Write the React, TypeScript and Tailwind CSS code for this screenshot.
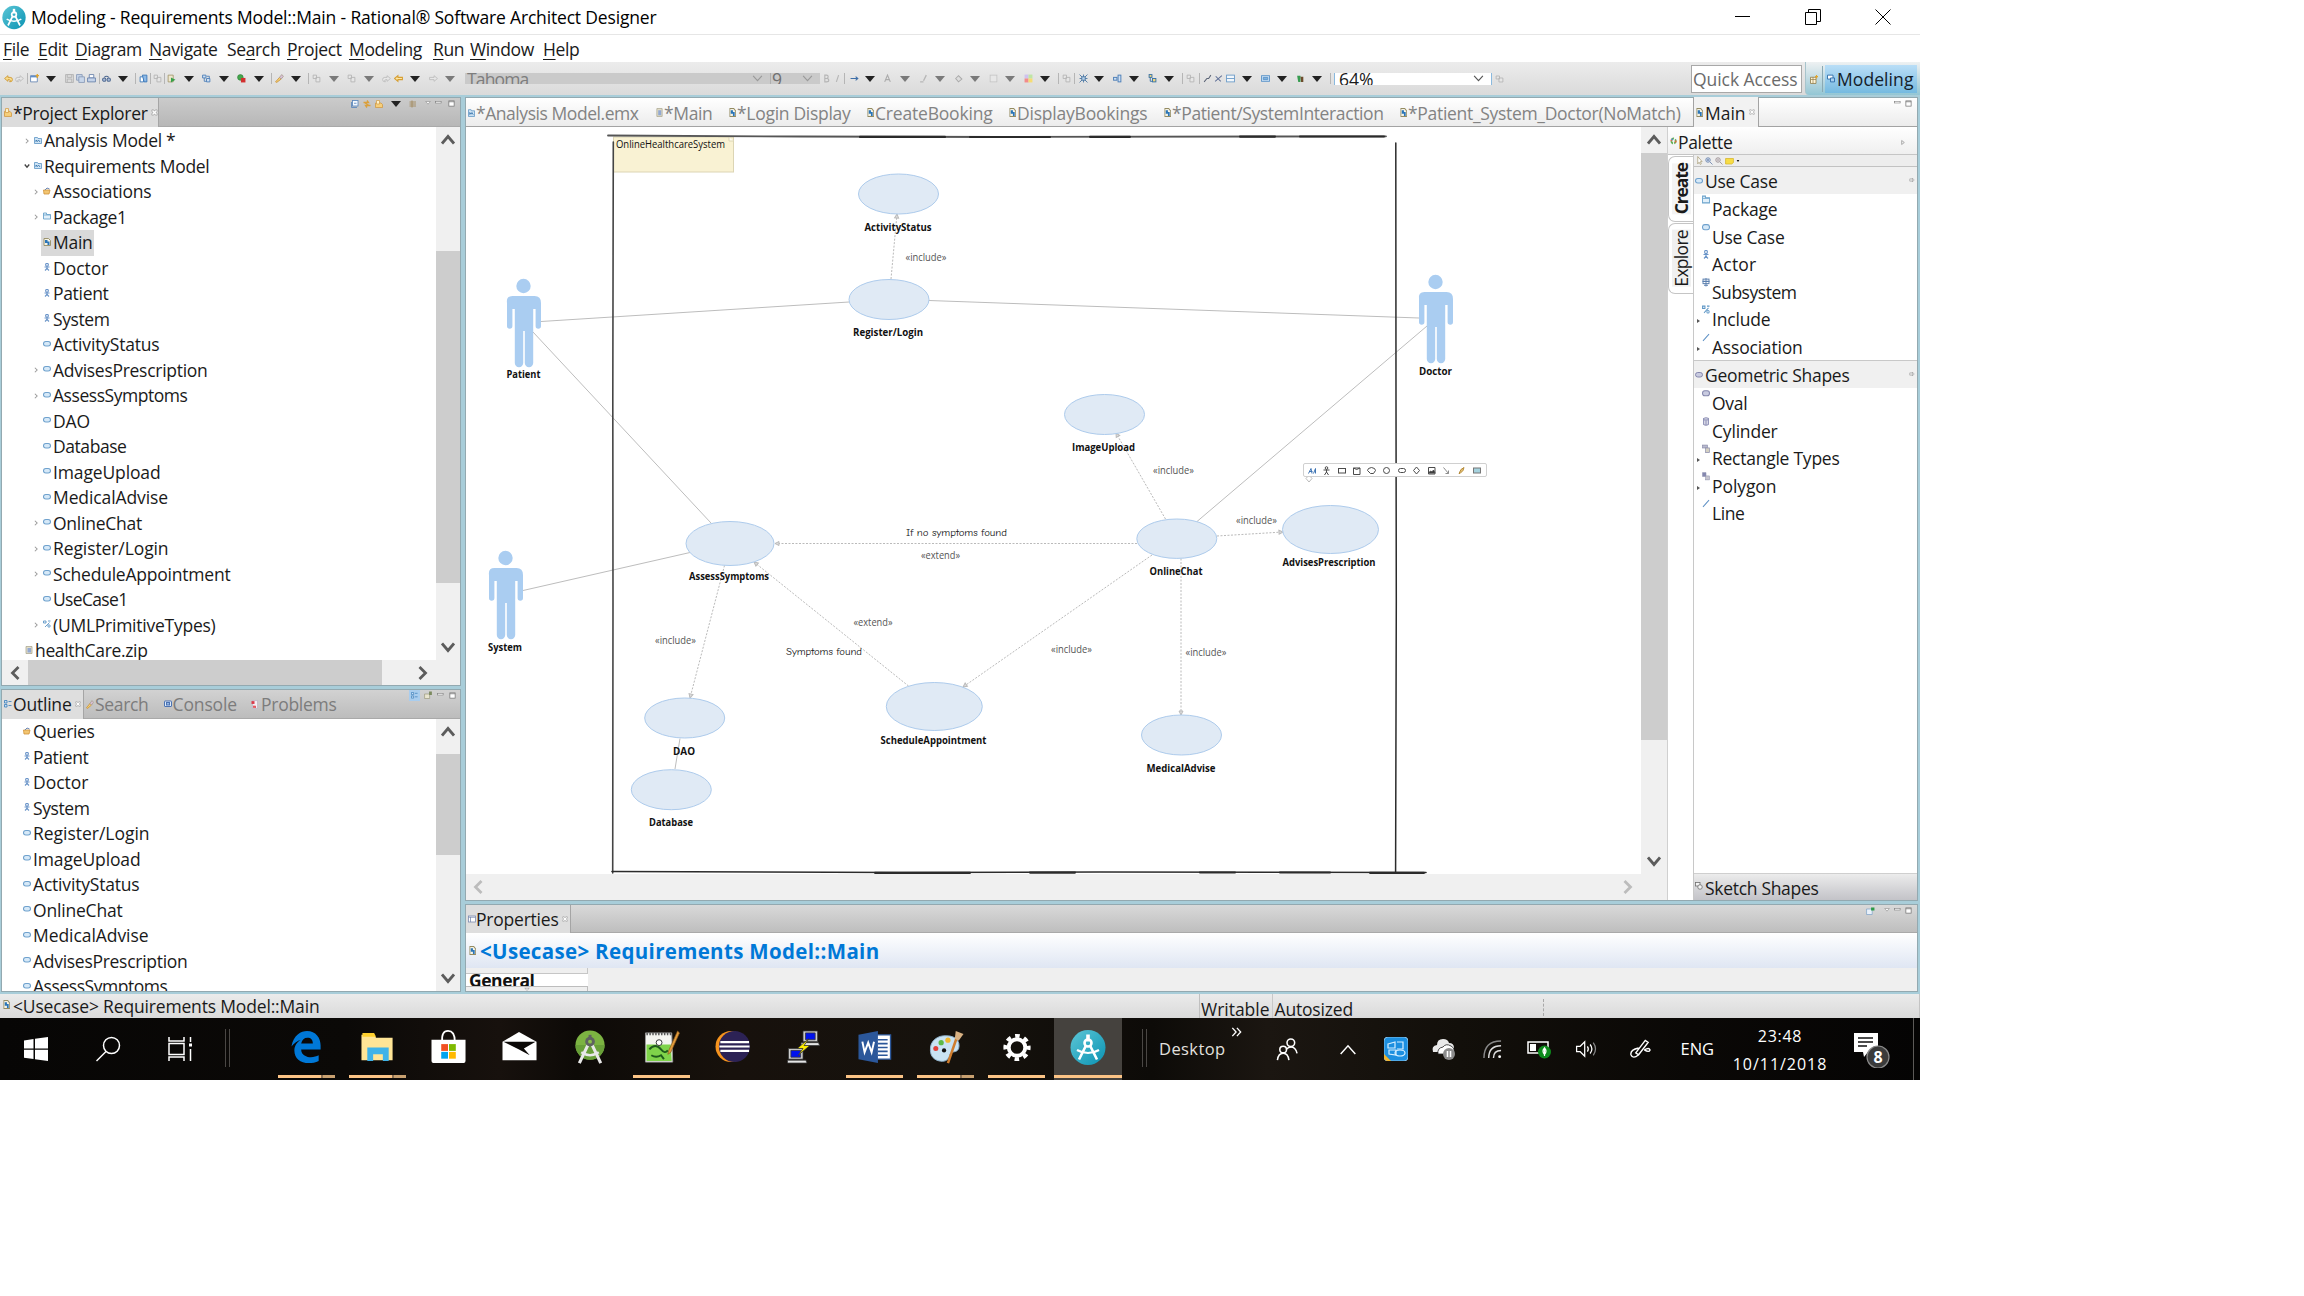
import React, { useLayoutEffect, useRef, useState } from 'react';

/* Single-line label whose tracking is tuned so that it fills a given width. */
function Fit({ w, children, className = '' }: { w: number; children: string; className?: string }) {
  const ref = useRef<HTMLSpanElement>(null);
  const [ls, setLs] = useState(0);
  useLayoutEffect(() => {
    const el = ref.current;
    if (el) setLs((w + 1.5 - el.getBoundingClientRect().width) / children.length);
  }, []);
  return (
    <span ref={ref} className={'inline-block shrink-0 whitespace-pre ' + className} style={{ letterSpacing: ls }}>
      {children}
    </span>
  );
}

type IconProps = { k: string; className?: string };

/* Miniature workbench icons on a 16 unit grid. */
function Ico({ k, className = '' }: IconProps) {
  const body: Record<string, React.ReactNode> = {
    model: (<><path d="M1 3h6l1 2h7v10H1z" fill="#cfe4f5" stroke="#5c94c4" strokeWidth="1.6" /><path d="M4 12V8l3 3 2-3 3 4" fill="none" stroke="#2f6ea8" strokeWidth="1.6" /></>),
    folder: (<><path d="M1 2h6v3h8v9H1z" fill="#e2f0fa" stroke="#6ba3cc" strokeWidth="1.8" /><path d="M1 6h14" stroke="#6ba3cc" strokeWidth="1.6" /></>),
    gold: (<><path d="M1 6h13l-2 8H2z" fill="#f3c672" stroke="#cf9239" strokeWidth="1.6" /><path d="M4 6l4-4 5 2" stroke="#6a86b4" strokeWidth="2" fill="none" /></>),
    diagram: (<><path d="M2 1h9l4 4v10H2z" fill="#f5f3e6" stroke="#948b62" strokeWidth="1.8" /><path d="M4 4h5v6H4zM9 7h4v7H9z" fill="#2a75b8" /></>),
    actor: (<g stroke="#6b95c9" strokeWidth="2.2" fill="none"><circle cx="8" cy="3.5" r="2.8" /><path d="M8 6v5M3 8h10M8 11l-4 4M8 11l4 4" /></g>),
    oval: <rect x="1" y="3" width="14" height="9" rx="4.500" fill="#d6e9f8" stroke="#6fa1cd" strokeWidth="2.2" />,
    ovalg: <rect x="1" y="3" width="14" height="9" rx="4.500" fill="#c9cbe0" stroke="#8486ad" strokeWidth="2" />,
    link: (<g fill="none" stroke="#5d96c6" strokeWidth="1.8"><path d="M1 2h5v4H1zM10 2h5M4 14L13 5" /><circle cx="12" cy="12" r="2.4" /></g>),
    zip: (<><path d="M2 1h12v14H2z" fill="#e3dfcb" stroke="#a8a48c" strokeWidth="1.5" /><path d="M5 4h7v9H5z" fill="#93a9d2" /></>),
    sub: (<g fill="none" stroke="#5b7fae" strokeWidth="1.8"><rect x="2" y="2" width="12" height="8" /><path d="M8 0v15M1 6h14M4 13h8" /></g>),
    line: <path d="M2 14L14 2" stroke="#5b8fc4" strokeWidth="2" />,
    cyl: (<g fill="#d6d7e6" stroke="#8d8fb5" strokeWidth="1.8"><path d="M3 3v10q5 3 10 0V3z" /><ellipse cx="8" cy="3.5" rx="5" ry="2" /><path d="M8 6v8" /></g>),
    rects: (<g fill="#b8bace" stroke="#8e90ad" strokeWidth="1.4"><rect x="1" y="2" width="10" height="5" /><rect x="7" y="7" width="8" height="8" fill="#d4d0c2" /></g>),
    poly: (<g fill="#8588b0" stroke="#8e90ad"><path d="M1 1h7v7H1z" /><rect x="7" y="7" width="8" height="7" fill="#c7c6cf" /></g>),
    back: <path d="M1 8l6-5v3h4q4 0 4 4t-5 4q3-4-1-4H7v3z" fill="#f8dc8b" stroke="#cf9a36" strokeWidth="1.6" />,
    backg: <path d="M15 8L9 3v3H5q-4 0-4 4t5 4q-3-4 1-4h2v3z" fill="#e7e7e7" stroke="#bdbdbd" strokeWidth="1.6" />,
    fwdg: <path d="M15 8L9 3v3H1v4h8v3z" fill="#e7e7e7" stroke="#bdbdbd" strokeWidth="1.6" />,
    leftg: <path d="M1 8l6-5v3h8v4H7v3z" fill="#fbe6a6" stroke="#d79f33" strokeWidth="1.8" />,
    new: (<><path d="M1 3h12v11H1z" fill="#fff" stroke="#6b8ab5" strokeWidth="1.6" /><path d="M1 3h12v3H1z" fill="#5f8ecb" /><path d="M13 0v7M10 3h6" stroke="#e0a52e" strokeWidth="2.4" /></>),
    disk: (<g fill="#dcdcdc" stroke="#b1b1b1" strokeWidth="1.5"><path d="M1 1h14v14H1z" /><path d="M4 1h8v5H4zM4 9h8v6H4z" /></g>),
    disks: (<g fill="#c8d6ea" stroke="#8799b7" strokeWidth="1.5"><path d="M1 1h10v10H1z" /><path d="M5 5h10v10H5z" /></g>),
    print: (<g fill="#c4d3ea" stroke="#6c84ad" strokeWidth="1.6"><path d="M4 1h8v6H4z" fill="#fff" /><path d="M1 7h14v7H1z" /></g>),
    glasses: (<g fill="#a9bbd8" stroke="#4d678f" strokeWidth="1.8"><circle cx="4" cy="10" r="3" /><circle cx="12" cy="10" r="3" /><path d="M4 6q4-4 8 0" fill="none" /></g>),
    blue: (<g fill="#8db9e6" stroke="#3a77b8" strokeWidth="1.6"><path d="M2 5h6v9H2z" fill="#fff" /><path d="M6 2h8v12H9z" /></g>),
    grey: (<g fill="#e6e6e6" stroke="#b5b5b5" strokeWidth="1.6"><path d="M2 2h6v6H2zM7 6h7v8H7z" /></g>),
    run: (<><path d="M2 2h9v12H2z" fill="#eee8cf" stroke="#a2976a" strokeWidth="1.5" /><path d="M7 6l8 4-8 5z" fill="#38a04a" /></>),
    boxes: (<g fill="#cfe0f3" stroke="#4d7fb8" strokeWidth="1.6"><path d="M1 2h6v5H1zM8 8h6v6H8z" /><path d="M8 4h5v4M4 7v6h4" fill="none" /></g>),
    stop: (<><circle cx="6" cy="6" r="5" fill="#45a74d" stroke="#2b7b34" /><rect x="7" y="7" width="8" height="8" fill="#d22f2f" /></>),
    torch: (<><path d="M1 14l7-8 3 3-8 6z" fill="#f5cf73" stroke="#c78f35" strokeWidth="1.4" /><path d="M8 6l4-5 3 3-4 5z" fill="#d9c0d8" stroke="#a79a8b" strokeWidth="1.4" /></>),
    bold: <path d="M5 2v12h3q4 0 4-3t-4-3H5h3q3 0 3-3T8 2z" fill="none" stroke="#b5b5b5" strokeWidth="2" />,
    ital: <path d="M10 2L6 14" stroke="#b5b5b5" strokeWidth="2" />,
    arrow: <path d="M1 8h13M10 4.500l4 3.500-4 3.500" fill="none" stroke="#3d6ea8" strokeWidth="1.8" />,
    ag: <path d="M3 14L8 2l5 12M5 10h6" fill="none" stroke="#ababab" strokeWidth="2" />,
    pen: <path d="M2 14h6M8 12l5-10" stroke="#b7b7b7" strokeWidth="2.4" fill="none" />,
    bucket: <path d="M3 8l5-5 6 6-6 5z" fill="#ddd" stroke="#aaa" strokeWidth="1.8" />,
    sq: <rect x="2" y="2" width="12" height="12" fill="#e7e7e7" stroke="#c4c4c4" strokeWidth="1.4" />,
    colors: (<><rect x="1" y="1" width="7" height="7" fill="#cfc2ee" /><rect x="8" y="1" width="7" height="7" fill="#bfe6a5" /><rect x="1" y="8" width="7" height="7" fill="#f28c8c" /><rect x="8" y="8" width="7" height="7" fill="#f6dc74" /></>),
    mesh: (<g stroke="#44719f" strokeWidth="1.5" fill="#b9d3ea"><path d="M1 1l14 14M15 1L1 15M8 1v14M1 8h14" /><rect x="5" y="5" width="6" height="6" /></g>),
    nodes: (<g fill="#cfe0f3" stroke="#4d7fb8" strokeWidth="1.7"><rect x="1" y="6" width="6" height="5" /><rect x="9" y="2" width="5" height="12" /></g>),
    tree: (<g fill="#f3d678" stroke="#3b74a8" strokeWidth="1.7"><rect x="2" y="1" width="5" height="5" /><rect x="8" y="8" width="6" height="6" /><path d="M4 6v7h4" fill="none" /></g>),
    cross: <path d="M2 13L14 3M3 4l9 9" fill="none" stroke="#5f6f96" strokeWidth="1.8" />,
    diag: <path d="M2 14l5-6h3l4-6" fill="none" stroke="#5a6375" strokeWidth="1.8" />,
    split: (<g fill="#f2f7fc" stroke="#6c9cc8" strokeWidth="1.6"><rect x="1" y="2" width="14" height="12" /><path d="M1 8h14" /></g>),
    img: (<g fill="#cfe3f5" stroke="#5a93c8" strokeWidth="1.6"><rect x="1" y="3" width="14" height="10" /><path d="M4 6h8v4H4z" fill="#7fb2de" /></g>),
    green: (<><path d="M2 3h6v11H4z" fill="#379c50" /><path d="M8 5h5v9H9z" fill="#6c4c2c" /></>),
    outline: (<g fill="#cfe0f3" stroke="#3f83bd" strokeWidth="1.7"><path d="M1 1h5v5H1zM1 9h5v5H1z" /><path d="M9 3h6M9 11h6" /></g>),
    console: (<g stroke="#4c73b3" strokeWidth="2"><rect x="1" y="2" width="14" height="11" rx="1" fill="#dce9f8" /><rect x="5" y="5" width="6" height="5" fill="#93b7e6" /></g>),
    problems: (<><path d="M3 1h10v14H3z" fill="#f3eef4" stroke="#b3a4bb" /><path d="M1 2h6v5H1z" fill="#d83a4a" /><path d="M4 10h6v4H4z" fill="#e35b62" /></>),
    prop: (<g stroke="#7a8bb0" strokeWidth="1.6" fill="#fff"><rect x="1" y="2" width="14" height="12" /><path d="M1 4.500h14M5 4v10" /></g>),
    palette: (<><circle cx="8" cy="8" r="5" fill="none" stroke="#5fae52" strokeWidth="4" strokeDasharray="6 3" /><circle cx="8" cy="8" r="5" fill="none" stroke="#e06a3c" strokeWidth="4" strokeDasharray="3 12" /><circle cx="5" cy="5" r="2" fill="#4f8cd0" /></>),
    cursor: <path d="M4 1v13l3-3 3 4 2-1-2-4h4z" fill="#fff" stroke="#9a8c62" strokeWidth="1.3" />,
    zin: (<g stroke="#6d84ab" fill="#cfdcf0" strokeWidth="1.7"><circle cx="6" cy="6" r="4.500" /><path d="M6 4v4M4 6h4M10 10l5 5" /></g>),
    zout: (<g stroke="#9a8f8f" fill="#e3e0e6" strokeWidth="1.7"><circle cx="6" cy="6" r="4.500" /><path d="M4 6h4M10 10l5 5" /></g>),
    note: <path d="M1 3h14v8l-3 3H1z" fill="#f7dc45" stroke="#d5b528" strokeWidth="1.4" />,
    collapse: (<g stroke="#5b87bd" strokeWidth="1.7" fill="#f4f9ff"><rect x="3" y="1" width="11" height="11" /><path d="M1 4v11h11M6 6.500h5" fill="none" /></g>),
    sync: <path d="M1 5h10l-3-4M15 11H5l3 4M3 5l9 6" fill="none" stroke="#dba03b" strokeWidth="2.6" />,
    pkg: (<><path d="M1 6h11l3 3v6H1z" fill="#f6cf7b" stroke="#cf9740" strokeWidth="1.5" /><path d="M3 1h6v7H3z" fill="#fff2c9" stroke="#d49d49" strokeWidth="1.5" /></>),
    filter: <path d="M1 4h13M1 8h13M1 12h13M6 1v14" fill="none" stroke="#a38a5e" strokeWidth="1.8" />,
    min: <rect x="1" y="4" width="13" height="4" fill="#fff" stroke="#7c7c7c" strokeWidth="1.5" />,
    max: (<g fill="#fff" stroke="#6e6e6e" strokeWidth="1.6"><rect x="2" y="2" width="12" height="12" /><path d="M2 4h12" /></g>),
    vm: <path d="M2 4h12l-6 7z" fill="#fff" stroke="#7c7c7c" strokeWidth="1.4" />,
    x: <path d="M2 2h4l2 3 2-3h4v4l-3 2 3 2v4h-4l-2-3-2 3H2v-4l3-2-3-2z" fill="#fff" stroke="#9b9b9b" strokeWidth="1.6" />,
    pin: (<><path d="M1 4h10v11H1z" fill="#e9f1fa" stroke="#7aa0c8" strokeWidth="1.3" /><path d="M9 1h6v6H9z" fill="#2d9a48" /></>),
    pin2: (<><path d="M1 6h9v9H1z" fill="#e9e5cf" stroke="#9c997e" strokeWidth="1.3" /><path d="M9 1h5v7H9z" fill="#7b8a5e" /></>),
    persp: (<><path d="M1 4h11v11H1z" fill="#fff6da" stroke="#917b46" strokeWidth="1.5" /><path d="M1 8h11M6 4v11" stroke="#917b46" strokeWidth="1.3" /><path d="M13 0v6M10 3h6" stroke="#e0a52e" strokeWidth="2.2" /></>),
    modeling: (<g fill="#fff" stroke="#2f6ea8" strokeWidth="1.7"><path d="M1 2h11v7H1z" /><path d="M7 7h8v7H7z" fill="#a8d0f0" /></g>),
    shapes: (<g fill="#f4f4f4" stroke="#6e6e6e" strokeWidth="1.6"><rect x="1" y="1" width="9" height="7" /><circle cx="10" cy="10" r="4.500" /></g>),
    pinh: <path d="M2 5h7M2 11h7M9 3v10l5-5zM2 5v6" fill="none" stroke="#8c8c8c" strokeWidth="1.4" />,
  };
  const size = className.includes('h-[') ? '' : 'h-[8px] w-[8px] ';
  return (
    <svg viewBox="0 0 16 16" preserveAspectRatio="none" className={'shrink-0 ' + size + className}>
      {body[k]}
    </svg>
  );
}

function Chevron({ dir, dim = false }: { dir: 'up' | 'down' | 'left' | 'right'; dim?: boolean }) {
  const d = { up: 'M1 10.500L7 3.500l6 7', down: 'M1 3.500l6 7 6-7', left: 'M10.500 1l-6 6 6 6', right: 'M3.500 1l6 6-6 6' }[dir];
  return (
    <svg viewBox="0 0 14 14" className="h-[14px] w-[14px] shrink-0">
      <path d={d} fill="none" stroke={dim ? '#bcbcbc' : '#5c5c5c'} strokeWidth="2.8" />
    </svg>
  );
}

/* ------------------------------------------------------------ title and menu */

function CompassLogo({ className }: { className: string }) {
  return (
    <svg viewBox="0 0 36 36" className={className}>
      <defs>
        <linearGradient id="lg" x1="0" y1="0" x2="1" y2="1">
          <stop offset="0" stopColor="#5cc6d6" />
          <stop offset="1" stopColor="#0b93b3" />
        </linearGradient>
      </defs>
      <circle cx="18" cy="18" r="17.500" fill="url(#lg)" />
      <g fill="none" stroke="#fff" strokeWidth="2.600">
        <path d="M18 5v7" strokeWidth="3.600" />
        <circle cx="18" cy="13.500" r="3.500" />
        <path d="M16 16L9 30M20 16l7 14" />
        <path d="M7 20.500q5 3 11 3t11-3" strokeWidth="2.200" />
      </g>
    </svg>
  );
}

function TitleBar() {
  return (
    <div className="flex h-[35px] items-center border-b border-[#e6e6e6] bg-white pl-[2px] text-[17.5px] text-black">
      <CompassLogo className="h-[25px] w-[24px]" />
      <Fit w={624} className="ml-[5px]">Modeling - Requirements Model::Main - Rational® Software Architect Designer</Fit>
      <div className="ml-auto flex items-center gap-[54px] pr-[29px]">
        <svg viewBox="0 0 16 16" className="h-4 w-4"><path d="M0 7.500h15" stroke="#000" fill="none" /></svg>
        <svg viewBox="0 0 16 16" className="h-4 w-4"><path d="M.5 3.500h11v12H.5zM3.500 3.500v-3h12v12h-4" stroke="#000" fill="none" /></svg>
        <svg viewBox="0 0 16 16" className="h-4 w-4"><path d="M.5.5l15 15M15.500.5l-15 15" stroke="#000" fill="none" /></svg>
      </div>
    </div>
  );
}

function MenuBar() {
  const items: [string, string, string, string][] = [
    ['', 'F', 'ile', 'w-[35px]'], ['', 'E', 'dit', 'w-[37px]'], ['', 'D', 'iagram', 'w-[74px]'], ['', 'N', 'avigate', 'w-[78px]'],
    ['Se', 'a', 'rch', 'w-[60px]'], ['', 'P', 'roject', 'w-[62px]'], ['', 'M', 'odeling', 'w-[84px]'], ['', 'R', 'un', 'w-[37px]'],
    ['', 'W', 'indow', 'w-[73px]'], ['', 'H', 'elp', 'w-[40px]'],
  ];
  return (
    <div className="flex h-[27px] items-center bg-white pl-[3px] pt-px text-[17.5px] tracking-[-0.36px] text-[#1a1a1a]">
      {items.map(([a, u, b, w]) => (
        <span key={u + b} className={w + ' shrink-0 whitespace-nowrap'}>
          {a}<span className="underline decoration-1 underline-offset-[3px]">{u}</span>{b}
        </span>
      ))}
    </div>
  );
}

/* ------------------------------------------------------------------- toolbar */

type Tool = [string, number];

function ToolRun({ start, tools }: { start: number; tools: Tool[] }) {
  let prev = start - 4;
  return (
    <>
      {tools.map(([k, c], i) => {
        const ml = c - prev - 8;
        prev = c;
        return (
          <span key={i} className="flex h-[12px] w-[8px] shrink-0 items-center justify-center" style={{ marginLeft: ml }}>
            {k === 'v' || k === 'vg' ? (
              <svg viewBox="0 0 10 6" className="h-[6px] w-[10px] shrink-0"><path d="M0 0h10L5 6z" fill={k === 'v' ? '#222' : '#7a7a7a'} /></svg>
            ) : k === '|' ? (
              <span className="h-[11px] w-px bg-[#b5b5b5]" />
            ) : (
              <Ico k={k} className="h-[9px] w-[9px]" />
            )}
          </span>
        );
      })}
    </>
  );
}

const LEFT_TOOLS: Tool[] = [
  ['back', 8], ['backg', 19], ['|', 27], ['new', 34], ['v', 51], ['disk', 69], ['disks', 80], ['print', 91], ['|', 99], ['glasses', 106], ['v', 123],
  ['|', 135], ['blue', 143], ['|', 150], ['grey', 157], ['|', 164], ['run', 171], ['v', 189], ['boxes', 206], ['v', 224], ['stop', 241], ['v', 259],
  ['|', 271], ['torch', 279], ['v', 296], ['|', 308], ['grey', 316], ['vg', 334], ['grey', 351], ['vg', 369], ['backg', 386], ['leftg', 398], ['v', 415],
  ['fwdg', 433], ['vg', 450],
];

const MID_TOOLS: Tool[] = [
  ['bold', 826], ['ital', 837], ['|', 844], ['arrow', 854], ['v', 870], ['ag', 887], ['vg', 905], ['pen', 923], ['vg', 940], ['bucket', 958], ['vg', 975],
  ['sq', 993], ['vg', 1010], ['colors', 1028], ['v', 1045], ['|', 1058], ['grey', 1066], ['|', 1074], ['mesh', 1083], ['v', 1099], ['nodes', 1117],
  ['v', 1134], ['tree', 1152], ['v', 1169], ['|', 1182], ['grey', 1190], ['|', 1199], ['diag', 1207], ['cross', 1218], ['split', 1230], ['v', 1247],
  ['img', 1265], ['v', 1282], ['green', 1300], ['v', 1317], ['|', 1330],
];

function ComboArrow({ color }: { color: string }) {
  return <svg viewBox="0 0 12 8" className="h-[7px] w-[11px] shrink-0"><path d="M1 1l5 5.500L11 1" fill="none" stroke={color} strokeWidth="1.300" /></svg>;
}

function Toolbar() {
  return (
    <div className="flex h-[33px] shrink-0 items-center bg-gradient-to-b from-[#ececec] to-[#dadada]">
      <ToolRun start={0} tools={LEFT_TOOLS} />
      <div className="ml-[11px] flex h-[11px] w-[305px] shrink-0 items-start overflow-hidden bg-[#cacaca] text-[17.5px] leading-[17px] text-[#7d7d7d]">
        <Fit w={60} className="ml-[2px] mt-[-2px]">Tahoma</Fit>
        <span className="ml-auto mr-[7px] mt-[2px] flex"><ComboArrow color="#9a9a9a" /></span>
      </div>
      <div className="flex h-[11px] w-[50px] shrink-0 items-start overflow-hidden border-l border-[#b0b0b0] bg-[#cacaca] pl-[1px] text-[17.5px] leading-[17px] text-[#707070]">
        <span className="mt-[-2px]">9</span>
        <span className="ml-auto mr-[7px] mt-[2px] flex"><ComboArrow color="#9a9a9a" /></span>
      </div>
      <ToolRun start={820} tools={MID_TOOLS} />
      <div className="flex h-[12px] w-[158px] shrink-0 items-start overflow-hidden border-x border-[#8ab9de] bg-white pl-[4px] text-[17.5px] leading-[17px] text-[#1a1a1a]">
        <Fit w={33} className="mt-[-2px]">64%</Fit>
        <span className="ml-auto mr-[7px] mt-[2px] flex"><ComboArrow color="#555" /></span>
      </div>
      <Ico k="grey" className="ml-[3px] h-[8px] w-[9px]" />
      <div className="ml-auto flex h-[28px] w-[111px] items-center border border-[#a8a8a8] bg-white pl-px pt-px text-[17.5px] text-[#6b6b6b]">
        <Fit w={103}>Quick Access</Fit>
      </div>
      <div className="ml-[3px] flex h-full w-[115px] items-center rounded-bl border-l border-[#a8c4cc] bg-gradient-to-b from-[#eef1f2] to-[#93c6d4] pt-px">
        <Ico k="persp" className="ml-[4px] h-[9px] w-[8px]" />
        <span className="ml-[4px] h-[26px] w-px shrink-0 bg-[#8aa9b3]" />
        <span className="ml-[2px] flex h-[28px] w-[92px] shrink-0 items-center gap-[2px] bg-gradient-to-b from-[#b9def7] to-[#75bae0] pl-[2px] pt-px text-[17.5px] text-[#14202a]">
          <Ico k="modeling" className="mb-[2px] h-[9px] w-[8px]" />
          <Fit w={75}>Modeling</Fit>
        </span>
      </div>
    </div>
  );
}

/* ---------------------------------------------------------- project explorer */

function Twisty({ open }: { open?: boolean }) {
  return (
    <svg viewBox="0 0 8 8" className="h-[6px] w-[6px]">
      <path d={open ? 'M1 2l3 3.500L7 2' : 'M2.500 1l3 3-3 3'} fill="none" stroke={open ? '#444' : '#999'} strokeWidth={open ? 1.8 : 1.4} />
    </svg>
  );
}

const TREE: { t: string; w: number; i: string; l: number; tw?: 'c' | 'o'; sel?: boolean }[] = [
  { t: 'Analysis Model *', w: 130, i: 'model', l: 1, tw: 'c' },
  { t: 'Requirements Model', w: 164, i: 'model', l: 1, tw: 'o' },
  { t: 'Associations', w: 97, i: 'gold', l: 2, tw: 'c' },
  { t: 'Package1', w: 72, i: 'folder', l: 2, tw: 'c' },
  { t: 'Main', w: 38, i: 'diagram', l: 2, sel: true },
  { t: 'Doctor', w: 54, i: 'actor', l: 2 },
  { t: 'Patient', w: 54, i: 'actor', l: 2 },
  { t: 'System', w: 55, i: 'actor', l: 2 },
  { t: 'ActivityStatus', w: 105, i: 'oval', l: 2 },
  { t: 'AdvisesPrescription', w: 153, i: 'oval', l: 2, tw: 'c' },
  { t: 'AssessSymptoms', w: 133, i: 'oval', l: 2, tw: 'c' },
  { t: 'DAO', w: 35.5, i: 'oval', l: 2 },
  { t: 'Database', w: 72, i: 'oval', l: 2 },
  { t: 'ImageUpload', w: 106, i: 'oval', l: 2 },
  { t: 'MedicalAdvise', w: 113.5, i: 'oval', l: 2 },
  { t: 'OnlineChat', w: 87.5, i: 'oval', l: 2, tw: 'c' },
  { t: 'Register/Login', w: 114, i: 'oval', l: 2, tw: 'c' },
  { t: 'ScheduleAppointment', w: 176, i: 'oval', l: 2, tw: 'c' },
  { t: 'UseCase1', w: 73, i: 'oval', l: 2 },
  { t: '(UMLPrimitiveTypes)', w: 161, i: 'link', l: 2, tw: 'c' },
  { t: 'healthCare.zip', w: 111, i: 'zip', l: 0 },
];

const INDENT = ['pl-[13px]', 'pl-[22px]', 'pl-[31px]'];

function VBar({ lead, thumb, className }: { lead: string; thumb: string; className: string }) {
  return (
    <div className={'flex shrink-0 flex-col items-center bg-[#f0f0f0] ' + className}>
      <span className="flex h-[25px] items-center"><Chevron dir="up" /></span>
      <span className={'shrink-0 ' + lead} />
      <span className={'w-full shrink-0 bg-[#cdcdcd] ' + thumb} />
      <span className="mt-auto flex h-[26px] items-center"><Chevron dir="down" /></span>
    </div>
  );
}

function ProjectExplorer() {
  return (
    <section className="flex h-[589px] shrink-0 flex-col border border-[#93a9b0] bg-white">
      <header className="flex h-[29px] shrink-0 items-center border-b border-[#a9a9a9] bg-gradient-to-b from-[#cbcbcb] to-[#b7b7b7]">
        <div className="flex h-[29px] w-[157px] items-center border-r border-[#a5a5a5] bg-[#dcdcdc] pl-[2px] pt-[2px] text-[17.5px] text-[#1a1a1a]">
          <Ico k="pkg" className="mb-[2px] h-[9px] w-[8px]" />
          <Fit w={133} className="ml-px">*Project Explorer</Fit>
          <Ico k="x" className="mb-[2px] ml-[3px] h-[7px] w-[7px]" />
        </div>
        <div className="ml-auto flex h-full items-start gap-[4px] pr-[5px] pt-[2px]">
          <Ico k="collapse" /><Ico k="sync" /><Ico k="pkg" />
          <svg viewBox="0 0 10 6" className="mx-[4px] mt-[1px] h-[6px] w-[10px]"><path d="M0 0h10L5 6z" fill="#222" /></svg>
          <Ico k="filter" /><Ico k="vm" className="ml-[4px] h-[6px] w-[6px]" /><Ico k="min" className="h-[6px] w-[7px]" /><Ico k="max" className="ml-[2px] h-[7px] w-[7px]" />
        </div>
      </header>
      <div className="flex h-[533px] shrink-0">
        <div className="flex flex-1 flex-col overflow-hidden pt-[1px] text-[17.5px] text-[#1a1a1a]">
          {TREE.map((r) => (
            <div key={r.t} className={'flex h-[25.5px] shrink-0 items-center ' + INDENT[r.l]}>
              <span className="flex w-[8px] shrink-0">{r.tw && <Twisty open={r.tw === 'o'} />}</span>
              <span className={'flex h-full items-center gap-[2px] pr-[1px] ' + (r.sel ? 'bg-[#d9d9d9]' : '')}>
                <Ico k={r.i} className="mb-[2px] ml-[2px] h-[8px] w-[8px]" />
                <Fit w={r.w} className="leading-[25px]">{r.t}</Fit>
              </span>
            </div>
          ))}
        </div>
        <VBar className="w-[24px]" lead="h-[99px]" thumb="h-[332px]" />
      </div>
      <div className="flex min-h-0 flex-1 items-center bg-[#f0f0f0]">
        <span className="flex w-[26px] justify-center"><Chevron dir="left" /></span>
        <span className="h-full w-[354px] bg-[#cdcdcd]" />
        <span className="ml-[34px]"><Chevron dir="right" /></span>
      </div>
    </section>
  );
}

/* ------------------------------------------------------------------- outline */

const OUTLINE: [string, string, number][] = [
  ['gold', 'Queries', 60], ['actor', 'Patient', 54], ['actor', 'Doctor', 54], ['actor', 'System', 55], ['oval', 'Register/Login', 115], ['oval', 'ImageUpload', 106],
  ['oval', 'ActivityStatus', 105], ['oval', 'OnlineChat', 88], ['oval', 'MedicalAdvise', 114], ['oval', 'AdvisesPrescription', 153], ['oval', 'AssessSymptoms', 133],
];

function Outline() {
  return (
    <section className="flex h-[303px] shrink-0 flex-col overflow-hidden border border-[#93a9b0] bg-white">
      <header className="flex h-[29px] shrink-0 items-center border-b border-[#a9a9a9] bg-gradient-to-b from-[#d2d2d2] to-[#bcbcbc] text-[17.5px] text-[#7c7c7c]">
        <div className="flex h-[29px] w-[82px] shrink-0 items-center border-r border-[#a5a5a5] bg-[#dedede] pl-[2px] text-[#1a1a1a]">
          <Ico k="outline" />
          <Fit w={57} className="ml-[1px]">Outline</Fit>
          <Ico k="x" className="ml-[3px] h-[6px] w-[6px]" />
        </div>
        <Ico k="torch" className="ml-[2px] h-[9px] w-[8px]" /><Fit w={52} className="ml-px">Search</Fit>
        <Ico k="console" className="ml-[15px]" /><Fit w={63} className="ml-[1px]">Console</Fit>
        <Ico k="problems" className="ml-[14px] h-[9px] w-[8px]" /><Fit w={74} className="ml-[2px]">Problems</Fit>
        <div className="ml-auto flex h-full items-start gap-[4px] pr-[4px]">
          <span className="flex h-[11px] w-[11px] items-center justify-center bg-[#a9cdee]"><Ico k="outline" className="h-[7px] w-[7px]" /></span>
          <Ico k="pin2" className="mt-[1px] h-[8px] w-[9px]" /><Ico k="min" className="mt-[2px] h-[6px] w-[7px]" /><Ico k="max" className="ml-[1px] mt-[2px] h-[7px] w-[7px]" />
        </div>
      </header>
      <div className="flex min-h-0 flex-1">
        <div className="flex flex-1 flex-col overflow-hidden pl-[21px] text-[17.5px] text-[#1a1a1a]">
          {OUTLINE.map(([i, t, w]) => (
            <div key={t} className="flex h-[25.5px] shrink-0 items-center gap-[2px]">
              <Ico k={i} className="mb-[2px] h-[8px] w-[8px]" />
              <Fit w={w} className="leading-[25px]">{t}</Fit>
            </div>
          ))}
        </div>
        <VBar className="w-[24px]" lead="h-[10px]" thumb="h-[101px]" />
      </div>
    </section>
  );
}

/* ------------------------------------------------------------------- diagram */

function Person({ x, y }: { x: number; y: number }) {
  return (
    <g transform={`translate(${x} ${y})`} fill="#aacdf1">
      <ellipse cx="0" cy="7" rx="7.200" ry="7.200" />
      <path d="M-11 17H11Q17.500 17 17.500 24V47a2.700 2.700 0 0 1-5.400 0V30h-2.400V84a4 4 0 0 1-8.400 0V52h-1.600V84a4 4 0 0 1-8.400 0V30h-2.400V47a2.700 2.700 0 0 1-5.400 0V24Q-17.500 17-11 17Z" />
    </g>
  );
}

const CASES: [string, number, number, number, number, number, number, number][] = [
  ['ActivityStatus', 898.5, 194, 40, 20, 898, 227, 67],
  ['Register/Login', 889, 299.5, 40, 20, 888, 332, 70],
  ['ImageUpload', 1104.5, 414.5, 40, 20, 1103.5, 447, 63],
  ['OnlineChat', 1176.8, 538.7, 40, 19.7, 1176, 571.5, 53],
  ['AssessSymptoms', 730, 543.5, 44, 22, 729, 576.5, 80],
  ['AdvisesPrescription', 1330.5, 529.5, 48, 24, 1329, 562, 93],
  ['ScheduleAppointment', 934.3, 706.5, 48, 24, 933.5, 740, 106],
  ['DAO', 684.7, 718, 40, 20, 684, 751, 22],
  ['Database', 671.3, 789.7, 40, 20, 671, 822.5, 44],
  ['MedicalAdvise', 1181.5, 735, 40, 20, 1181, 768, 69],
];

const SOLID: number[][] = [
  [541, 321.5, 849, 302], [929, 300.5, 1419, 318], [533, 332, 711, 523], [523, 590.5, 690, 552.5], [1427, 326, 1197, 521.5], [680, 738.5, 675, 769],
];

const DASHED: number[][] = [
  [891, 279, 897, 214], [1165.5, 519, 1116, 433], [1217, 536, 1283, 532], [1137, 543.5, 775, 543.5], [1152, 555, 963, 687], [1181, 558.5, 1181, 715],
  [908.5, 686, 754, 562], [724.5, 565.5, 690, 698],
];

const STEREO: [string, number, number, number][] = [
  ['«include»', 926, 258, 41], ['«include»', 1173.5, 471, 41], ['«include»', 1256.5, 520.5, 41], ['«include»', 675.5, 640.5, 41], ['«include»', 1071.5, 649.5, 41],
  ['«include»', 1206, 653, 41], ['«extend»', 940.5, 556, 39], ['«extend»', 873, 622.5, 39],
];

function DiagramCanvas() {
  return (
    <svg viewBox="466 127 1175 747" className="h-[747px] w-[1175px] shrink-0 bg-white">
      <rect x="613.500" y="137" width="120" height="35" fill="#f9f2d3" stroke="#dcd5b4" />
      <path d="M729 137v4h4.500" fill="#fffdf0" stroke="#dcd5b4" />
      <text x="616" y="148.300" fontSize="10.500" textLength="109" lengthAdjust="spacingAndGlyphs" fill="#111">OnlineHealthcareSystem</text>
      {SOLID.map((l, i) => <line key={i} x1={l[0]} y1={l[1]} x2={l[2]} y2={l[3]} stroke="#bdbdbd" />)}
      {DASHED.map(([x1, y1, x2, y2], i) => {
        const a = (Math.atan2(y2 - y1, x2 - x1) * 180) / Math.PI;
        return (
          <g key={i} fill="none" stroke="#bababa">
            <line x1={x1} y1={y1} x2={x2} y2={y2} strokeDasharray="2 1.500" />
            <path d="M-4-2L0 0-4 2Z" fill="#ddd" transform={`translate(${x2} ${y2}) rotate(${a})`} />
          </g>
        );
      })}
      <g fill="none" stroke="#2b2b2b" strokeLinecap="round">
        <path d="M608 135.500L800 136.500 1000 137 1386 136.300" strokeWidth="1.800" stroke="#555" />
        <path d="M860 136.900H945M970 137H1050M1090 136.800H1130M1240 136.600H1275M1300 136.500H1384" strokeWidth="2.200" />
        <path d="M613.300 142L612.800 400 613 600 612.700 873" strokeWidth="1.600" stroke="#444" />
        <path d="M1395.800 143L1396 400 1396.300 600 1395.600 872" strokeWidth="1.500" />
        <path d="M612 871.500L900 872.500 1100 872 1426 872.500" strokeWidth="1.600" />
        <path d="M875 872.800H970M1030 872.600H1075M1200 872.500H1235M1280 872.500H1330M1370 872.800H1424" strokeWidth="2.200" />
      </g>
      {CASES.map(([t, cx, cy, rx, ry, lx, ly, w]) => (
        <g key={t}>
          <ellipse cx={cx} cy={cy} rx={rx} ry={ry} fill="#e0eaf5" stroke="#adcbec" />
          <text x={lx - w / 2} y={ly + 3.600} fontSize="10.500" fontWeight="700" textLength={w} lengthAdjust="spacingAndGlyphs" fill="#111">{t}</text>
        </g>
      ))}
      <Person x={523.5} y={279} />
      <Person x={1435.5} y={275} />
      <Person x={505.5} y={551} />
      <g fontSize="10.500" fontWeight="700" fill="#111">
        <text x="506.500" y="378" textLength="34" lengthAdjust="spacingAndGlyphs">Patient</text>
        <text x="1419" y="374.500" textLength="33" lengthAdjust="spacingAndGlyphs">Doctor</text>
        <text x="488" y="650.500" textLength="34" lengthAdjust="spacingAndGlyphs">System</text>
      </g>
      {STEREO.map(([t, x, y, w], i) => (
        <text key={i} x={x - w / 2} y={y + 3.300} fontSize="10.500" textLength={w} lengthAdjust="spacingAndGlyphs" fill="#555">{t}</text>
      ))}
      <g className="font-['Comic_Sans_MS','Comic_Neue','DejaVu_Sans',sans-serif]" fontSize="10" fill="#111">
        <text x="906" y="535.800" textLength="101" lengthAdjust="spacingAndGlyphs">If no symptoms found</text>
        <text x="786" y="654.500" textLength="76" lengthAdjust="spacingAndGlyphs">Symptoms found</text>
      </g>
      <g transform="translate(1303.500 463.500)">
        <path d="M5.500 11.500l3 3.500-3 3.500-3-3.500z" fill="#fff" stroke="#bbb" />
        <rect width="183" height="13" rx="1.500" fill="#fff" stroke="#d0d0d0" />
        <g fill="none" stroke="#4b4b4b" strokeWidth="1">
          <path d="M5 10l2.500-5 1 5M6 8h3M10 10l2-5 0 5" stroke="#3e74b4" />
          <g><circle cx="23" cy="4.500" r="1.300" /><path d="M20 6.500h6M23 6v3M23 8.500l-2 3M23 8.500l2 3" /></g>
          <rect x="35" y="5" width="7" height="4.500" />
          <path d="M50 4.500h6.500v6.500H50zM50 4.500q3 3 6.500 0" />
          <path d="M65 5l3-1 3 1 1 2-2 3h-3l-3-3z" />
          <circle cx="83" cy="7" r="3" />
          <rect x="95" y="5" width="7" height="4" rx="2" />
          <path d="M113 3.500l3 3.500-3 3.500-3-3.500z" />
          <path d="M125 4h6.500v6.500H125z" /><path d="M125 9.500l2-2 1.500 1 1.500-2 1.500 3z" fill="#333" />
          <path d="M140 4l5 6M145 7v3h-3" stroke="#8c8c8c" />
          <path d="M155.500 10l2-4 3-2-1 3-3 3z" fill="#e5c173" stroke="#b58b3b" />
          <rect x="170" y="4.500" width="7" height="5" fill="#a5d2de" stroke="#777" />
        </g>
      </g>
    </svg>
  );
}

/* -------------------------------------------------------------------- editor */

const TABS: [string, string, number, string][] = [
  ['model', '*Analysis Model.emx', 161, 'w-[188px]'],
  ['zip', '*Main', 47, 'w-[73px]'],
  ['diagram', '*Login Display', 112, 'w-[138px]'],
  ['diagram', 'CreateBooking', 116, 'w-[142px]'],
  ['diagram', 'DisplayBookings', 129, 'w-[155px]'],
  ['diagram', '*Patient/SystemInteraction', 210, 'w-[236px]'],
  ['diagram', '*Patient_System_Doctor(NoMatch)', 271, 'w-[293px]'],
];

type Item = { t: string; w: number; i: string; sub?: boolean };

const USE_CASE: Item[] = [
  { t: 'Package', w: 64, i: 'folder' }, { t: 'Use Case', w: 71, i: 'oval' }, { t: 'Actor', w: 43, i: 'actor' }, { t: 'Subsystem', w: 83, i: 'sub' },
  { t: 'Include', w: 57, i: 'link', sub: true }, { t: 'Association', w: 89, i: 'line', sub: true },
];

const GEOMETRIC: Item[] = [
  { t: 'Oval', w: 34, i: 'ovalg' }, { t: 'Cylinder', w: 64, i: 'cyl' }, { t: 'Rectangle Types', w: 126, i: 'rects', sub: true },
  { t: 'Polygon', w: 63, i: 'poly', sub: true }, { t: 'Line', w: 31, i: 'line' },
];

function DrawerHead({ i, t, w }: { i: string; t: string; w: number }) {
  return (
    <div className="flex h-[27px] shrink-0 items-center bg-[#f0f0f0] pl-[1px] pt-[2px]">
      <Ico k={i} className="mb-[2px] h-[8px] w-[8px]" /><Fit w={w} className="ml-[2px]">{t}</Fit>
      <Ico k="pinh" className="mb-[3px] ml-auto mr-[2px] h-[6px] w-[6px]" />
    </div>
  );
}

function DrawerItems({ items }: { items: Item[] }) {
  return (
    <>
      {items.map((r) => (
        <div key={r.t} className="flex h-[27.5px] shrink-0 items-start">
          <span className="flex w-[8px] shrink-0 justify-center pt-[15px]">
            {r.sub && <svg viewBox="0 0 3 4" className="h-[4px] w-[3px]"><path d="M0 0v4l3-2z" fill="#555" /></svg>}
          </span>
          <Ico k={r.i} className="mt-[1px] h-[9px] w-[8px]" />
          <Fit w={r.w} className="ml-[2px] mt-[3px] leading-[25px]">{r.t}</Fit>
        </div>
      ))}
    </>
  );
}

function Palette() {
  return (
    <aside className="flex h-full w-[250px] shrink-0 flex-col border-l border-[#d0d0d0] bg-white text-[17.5px] text-[#1a1a1a]">
      <div className="flex h-[28px] shrink-0 items-center border-b border-[#c5c5c5] bg-gradient-to-b from-white to-[#efefef] pl-[2px] pt-[3px]">
        <Ico k="palette" className="mb-[3px] h-[8px] w-[7px]" /><Fit w={53} className="ml-px">Palette</Fit>
        <svg viewBox="0 0 6 8" className="ml-auto mr-[12px] h-[7px] w-[4px]"><path d="M1 1v6l4-3z" fill="none" stroke="#888" /></svg>
      </div>
      <div className="flex min-h-0 flex-1">
        <div className="flex w-[26px] shrink-0 flex-col border-r border-[#c8c8c8]">
          <div className="mt-px flex h-[66px] shrink-0 items-center justify-center rounded-l-[7px] border border-r-0 border-[#c5c5c5] bg-white">
            <span className="rotate-180 whitespace-nowrap bg-[#f4f4f4] font-bold leading-[19px] tracking-[-1.1px] [writing-mode:vertical-rl]">Create</span>
          </div>
          <div className="mt-px flex h-[71px] shrink-0 items-center justify-center rounded-l-[7px] border border-r-0 border-[#c5c5c5] bg-white">
            <span className="rotate-180 whitespace-nowrap bg-[#f0f0f0] leading-[19px] tracking-[-0.7px] [writing-mode:vertical-rl]">Explore</span>
          </div>
        </div>
        <div className="flex flex-1 flex-col">
          <div className="flex h-[12px] shrink-0 items-center gap-[2px] border-b border-[#c2c2c2] bg-[#ededed] pl-[2px]">
            <Ico k="cursor" className="h-[9px] w-[7px]" /><Ico k="zin" /><Ico k="zout" /><Ico k="note" className="h-[8px] w-[9px]" />
            <svg viewBox="0 0 4 3" className="h-[2px] w-[4px]"><path d="M0 0h4L2 3z" fill="#111" /></svg>
          </div>
          <DrawerHead i="oval" t="Use Case" w={71} />
          <div className="flex h-[167px] shrink-0 flex-col border-b border-[#c8c8c8]"><DrawerItems items={USE_CASE} /></div>
          <DrawerHead i="ovalg" t="Geometric Shapes" w={143} />
          <DrawerItems items={GEOMETRIC} />
          <div className="mt-auto flex h-[27px] shrink-0 items-center border-t border-[#cfcfcf] bg-gradient-to-b from-[#ececec] to-[#c3c3c8] pl-[1px] pt-[2px]">
            <Ico k="shapes" className="mb-[4px] h-[8px] w-[8px]" /><Fit w={112} className="ml-[2px]">Sketch Shapes</Fit>
          </div>
        </div>
      </div>
    </aside>
  );
}

function Editor() {
  return (
    <section className="flex h-[804px] shrink-0 flex-col border border-[#93a9b0] bg-white">
      <header className="flex h-[29px] shrink-0 items-center border-b border-[#a3a3a3] bg-gradient-to-b from-white to-[#ececec] pl-[2px] text-[17.5px] text-[#838383]">
        {TABS.map(([i, t, w, c]) => (
          <div key={t} className={'flex shrink-0 items-center gap-px pt-[2px] ' + c}>
            <Ico k={i} className="mb-[2px] h-[9px] w-[7px]" />
            <Fit w={w}>{t}</Fit>
          </div>
        ))}
        <div className="flex h-[30px] w-[66px] items-center border-x border-[#a3a3a3] bg-[#f2f2f2] pl-[2px] pt-[2px] text-[#1a1a1a]">
          <Ico k="diagram" className="mb-[2px] h-[9px] w-[7px]" /><Fit w={39} className="ml-[2px]">Main</Fit><Ico k="x" className="mb-[2px] ml-[3px] h-[6px] w-[6px]" />
        </div>
        <div className="ml-auto flex h-full items-start gap-[4px] pr-[5px] pt-[2px]"><Ico k="min" className="h-[6px] w-[7px]" /><Ico k="max" className="h-[7px] w-[7px]" /></div>
      </header>
      <div className="flex min-h-0 flex-1">
        <div className="flex flex-col">
          <div className="flex">
            <DiagramCanvas />
            <VBar className="w-[26px]" lead="h-[1px]" thumb="h-[587px]" />
          </div>
          <div className="flex flex-1 items-center justify-between bg-[#f0f0f0] pl-[5px] pr-[32px]">
            <Chevron dir="left" dim /><Chevron dir="right" dim />
          </div>
        </div>
        <Palette />
      </div>
    </section>
  );
}

function Properties() {
  return (
    <section className="flex h-[88px] shrink-0 flex-col overflow-hidden border border-[#93a9b0] bg-[#efefef]">
      <header className="flex h-[28px] shrink-0 items-center border-b border-[#a9a9a9] bg-gradient-to-b from-[#d9d9d9] to-[#bebebe]">
        <div className="flex h-[28px] w-[105px] items-center border-r border-[#a5a5a5] bg-[#dedede] pl-[2px] pt-[2px] text-[17.5px] text-[#1a1a1a]">
          <Ico k="prop" className="mb-[2px] h-[8px] w-[8px]" /><Fit w={81}>Properties</Fit><Ico k="x" className="mb-[2px] ml-[3px] h-[6px] w-[6px]" />
        </div>
        <div className="ml-auto flex h-full items-start gap-[4px] pr-[5px] pt-[2px]">
          <Ico k="pin" className="mr-[5px] h-[8px] w-[9px]" /><Ico k="vm" className="h-[6px] w-[6px]" /><Ico k="min" className="h-[6px] w-[7px]" /><Ico k="max" className="h-[7px] w-[7px]" />
        </div>
      </header>
      <div className="flex h-[35px] shrink-0 items-center bg-gradient-to-b from-white to-[#dfe6f3] pl-[3px] pt-[2px] text-[20.5px] font-bold text-[#0078d7]">
        <Ico k="diagram" className="mb-[3px] h-[9px] w-[7px]" /><Fit w={398} className="ml-[4px]">{'<Usecase> Requirements Model::Main'}</Fit>
      </div>
      <div className="flex h-[6px] w-[122px] shrink-0 border-b border-r border-[#c6c6c6]" />
      <div className="flex h-[12px] w-[122px] shrink-0 items-start overflow-hidden bg-white pl-[3px] text-[17.5px] font-bold leading-[18px] text-[#111]">
        <Fit w={64} className="mt-[-3px]">General</Fit>
      </div>
      <div className="flex h-[5px] w-[122px] shrink-0 items-start justify-center border-r border-t border-[#bdbdbd]"><Ico k="vm" className="h-[5px] w-[6px]" /></div>
    </section>
  );
}

function StatusBar() {
  return (
    <div className="flex h-[24px] shrink-0 items-center border-r border-[#c4c4c4] bg-gradient-to-b from-[#ebebeb] to-[#dadada] pl-[3px] text-[17.5px] text-[#1a1a1a]">
      <Ico k="diagram" className="mb-[3px] h-[9px] w-[7px]" />
      <Fit w={305} className="ml-[3px]">{'<Usecase> Requirements Model::Main'}</Fit>
      <div className="ml-auto flex h-full w-[720px] items-center pt-[6px]">
        <span className="mb-[6px] h-[24px] w-px bg-[#c0c0c0]" />
        <Fit w={67} className="ml-px">Writable</Fit>
        <span className="mb-[6px] ml-[2px] h-[24px] w-px bg-[#c8c8c8]" />
        <Fit w={77} className="ml-[2px]">Autosized</Fit>
        <span className="mb-[4px] ml-[190px] h-[17px] border-l border-dashed border-[#a8a8a8]" />
      </div>
    </div>
  );
}

/* ------------------------------------------------------------------- taskbar */

const APP_ICONS: Record<string, React.ReactNode> = {
  edge: <path d="M2 17C4 5 12 1 18 1c9 0 14 7 14 15v4H12c0 6 6 8 10 8 3 0 6-1 8-2v6c-3 2-7 2-10 2C11 34 5 29 5 21c0-5 3-9 7-11-4 1-8 4-10 7zM12 14h12c0-4-2-6-5.500-6S13 10 12 14z" fill="#0078d7" />,
  explorer: (<><path d="M1 5h13l2 3h17v23H1z" fill="#ffe596" /><path d="M2 3h12l2 4H2z" fill="#ffd02e" /><path d="M7 32V18h22v14h-6v-7H13v7z" fill="#3fb3e8" /></>),
  store: (<><path d="M11 12q-1-11 6-11t7 11" fill="none" stroke="#fff" strokeWidth="1.800" /><path d="M0 10h35v22q0 2-2 2H2q-2 0-2-2z" fill="#fff" /><path d="M10 14.500h7v7h-7z" fill="#f25022" /><path d="M18 14.500h7v7h-7z" fill="#7fba00" /><path d="M10 22.500h7v7h-7z" fill="#00a4ef" /><path d="M18 22.500h7v7h-7z" fill="#ffb900" /></>),
  mail: (<><path d="M0 12L17 2l18 10v19H0z" fill="#fff" /><path d="M1 12h33L22 19l6 7-11-6z" fill="#0b0806" /></>),
  android: (<><ellipse cx="17" cy="15.500" rx="15" ry="15" fill="#7cb342" /><path d="M2 15.500a15 15 0 0 0 30 0z" fill="#689f38" /><path d="M15 15L6 34M19 15l9 19" stroke="#e8e8e8" strokeWidth="3.200" /><path d="M8 23q9 6 18 0" stroke="#e8e8e8" strokeWidth="2.500" fill="none" /><circle cx="17" cy="12" r="5" fill="#5f6360" /><path d="M15.500 5h3v4h-3z" fill="#5f6360" /><circle cx="17" cy="12" r="2" fill="#8bc34a" /></>),
  npp: (<><path d="M1 3h27l1 30H1z" fill="#f4f4f0" stroke="#999" /><path d="M2 15h25l1 17H2z" fill="#7fd34a" /><path d="M2 4h26" stroke="#555" strokeWidth="3" strokeDasharray="1.500 1.500" /><path d="M5 20q6-7 12 0 4 5 7 1M7 26q5 3 10 0l3 4" stroke="#1f5a1c" strokeWidth="2" fill="none" /><circle cx="15" cy="13" r="3" fill="#fff" stroke="#333" /><path d="M34 1l2 2-9 20-3 2 1-4z" fill="#e29b3c" stroke="#8b5a1e" strokeWidth=".7" /></>),
  eclipse: (<><circle cx="16" cy="17" r="16" fill="#f7941e" /><circle cx="19.500" cy="17" r="16" fill="#2c2255" /><path d="M5 12.500h29.500M4 17h31M5 21.500h29.500" stroke="#fff" strokeWidth="2.200" /></>),
  putty: (<g stroke="#333" strokeWidth=".8"><path d="M17 1h15v11H17z" fill="#cfcfcf" /><path d="M19.500 3h10v7h-10z" fill="#0012ee" /><path d="M15 13h18l1 3H15z" fill="#e5e5e5" /><path d="M2 19h15v11H2z" fill="#cfcfcf" /><path d="M4.500 21h10v7h-10z" fill="#0012ee" /><path d="M1 31h19l1 3H1z" fill="#e5e5e5" /><path d="M23 9L11 19h6l-5 7 12-10h-6z" fill="#ffee00" /></g>),
  word: (<><path d="M18 5h16v25H18z" fill="#fff" stroke="#2b579a" strokeWidth="1.400" /><path d="M21 10h10M21 14h10M21 18h10M21 22h10M21 26h10" stroke="#2b579a" strokeWidth="1.700" /><path d="M1 5l20-4v33L1 30z" fill="#2b579a" /><path d="M5 12l2.300 11L11 13l3.500 10L17 12" fill="none" stroke="#fff" strokeWidth="2" /></>),
  paint: (<><path d="M2 21C1 11 10 5 19 6c9 0 14 6 12 13-2 5-7 2-9 6-1 5-4 8-10 7C6 31 2 27 2 21z" fill="#c9e3f3" stroke="#8fb3cc" /><circle cx="7.500" cy="19" r="2.600" fill="#e0413a" /><circle cx="13" cy="13" r="2.700" fill="#5cb946" /><circle cx="20" cy="10.500" r="2.700" fill="#f0b730" /><circle cx="16" cy="21" r="2.200" fill="#111" /><path d="M29 8L20 34" stroke="#cf7d2e" strokeWidth="2.600" /><path d="M27 9l1-8 8 3-5 7z" fill="#d8b183" /></>),
  gear: (<g fill="none" stroke="#fff"><circle cx="18" cy="18" r="8.500" strokeWidth="4" /><circle cx="18" cy="18" r="12" strokeWidth="4" strokeDasharray="4.700 4.725" strokeDashoffset="2.300" /></g>),
};

const APPS: { k: string; bar?: string; more?: boolean }[] = [
  { k: 'edge', bar: 'w-[57px]', more: true }, { k: 'explorer', bar: 'w-[57px]', more: true }, { k: 'store' }, { k: 'mail' }, { k: 'android' },
  { k: 'npp', bar: 'w-[57px]' }, { k: 'eclipse' }, { k: 'putty' }, { k: 'word', bar: 'w-[57px]' }, { k: 'paint', bar: 'w-[57px]', more: true },
  { k: 'gear', bar: 'w-[57px]' }, { k: 'rsa', bar: 'w-[68px]' },
];

function Sep() {
  return <span className="h-[38px] w-[5px] shrink-0 border-x border-[#4a4744]" />;
}

function Taskbar() {
  return (
    <div className="flex h-[62px] shrink-0 items-center bg-[linear-gradient(90deg,#070605_0%,#0b0907_18%,#17110d_26%,#0d0a07_30%,#17110c_38%,#16120d_50%,#0d0b08_60%,#1b1611_66%,#120f0a_76%,#0a0806_88%,#050404_100%)] text-white">
      <svg viewBox="0 0 24 24" className="ml-[24px] h-[24px] w-[24px]"><path d="M0 3.500L9.500 2v9.500H0zM11 1.800L24 0v11.500H11zM0 12.700h9.500V22L0 20.800zM11 12.700h13V24l-13-1.800z" fill="#fff" /></svg>
      <svg viewBox="0 0 26 26" className="ml-[47px] h-[26px] w-[26px]"><g fill="none" stroke="#fff" strokeWidth="1.500"><circle cx="16.500" cy="9.500" r="8" /><path d="M11 15.500L1.500 25" /></g></svg>
      <svg viewBox="0 0 24 24" className="ml-[47px] h-[24px] w-[24px]"><g fill="none" stroke="#fff" strokeWidth="1.500"><path d="M1 0v4h15V0M1 6.500h15v11H1zM1 24v-4h15v4M22.500 0v5M22.500 12v12" /></g><path d="M21 6.500h3v3h-3z" fill="#fff" /></svg>
      <span className="mb-[2px] ml-[33px] flex"><Sep /></span>
      <div className="ml-[41px] flex h-full">
        {APPS.map((a) => (
          <div key={a.k} className={'flex h-full flex-col items-center justify-end pb-[2px] ' + (a.k === 'rsa' ? 'ml-[2px] w-[68px] bg-[#45423e]' : 'w-[71px]')}>
            {a.k === 'rsa' ? (
              <CompassLogo className="mb-[9px] h-[37px] w-[36px]" />
            ) : (
              <svg viewBox="0 0 36 36" className="mb-[10px] h-[35px] w-[36px]">{APP_ICONS[a.k]}</svg>
            )}
            <span className={'flex h-[3px] ' + (a.bar ? a.bar + ' bg-[#fcc486]' : 'w-0')}>
              {a.more && <span className="ml-auto h-full w-[14px] border-l-2 border-[#8a6f52] bg-[#c8a070]" />}
            </span>
          </div>
        ))}
      </div>
      <span className="mb-[2px] ml-[20px] flex"><Sep /></span>
      <Fit w={65} className="ml-[12px] text-[16.5px] text-[#e2e0df]">Desktop</Fit>
      <svg viewBox="0 0 12 12" className="mb-[34px] ml-[5px] h-[10px] w-[11px]"><path d="M1 1l4.500 5L1 11M6.500 1L11 6l-4.500 5" fill="none" stroke="#fff" strokeWidth="1.600" /></svg>
      <svg viewBox="0 0 24 24" className="ml-[33px] h-[23px] w-[24px]"><g fill="none" stroke="#fff" strokeWidth="1.600"><circle cx="16" cy="5" r="4" /><circle cx="8" cy="12" r="3.500" /><path d="M11 12q5-5 9-1 2 2 2.500 5M2 23q1-7 6-7t6 7" /></g></svg>
      <svg viewBox="0 0 18 12" className="ml-[40px] h-[11px] w-[18px]"><path d="M1 11L9 2l8 9" fill="none" stroke="#fff" strokeWidth="1.600" /></svg>
      <svg viewBox="0 0 24 24" className="ml-[27px] h-[24px] w-[24px]"><rect width="24" height="24" rx="4" fill="#1c8fe0" stroke="#9fd1f2" strokeWidth=".8" /><g fill="none" stroke="#d6efff" strokeWidth="1.200"><path d="M4 7l7-2v6H4zM13 5h6v7h-6M5 13h7v5l-7-1z" /><ellipse cx="16" cy="16" rx="5" ry="3" /></g><path d="M0 17l7 7H4q-4 0-4-4z" fill="#f2b52c" /></svg>
      <svg viewBox="0 0 26 24" className="ml-[23px] h-[24px] w-[26px]"><path d="M2 15Q0 9 6 8q0-6 6-6 5 0 6 4 5 0 5 5v4z" fill="#e9e9e9" /><path d="M7 17q-1-6 5-7 3-4 8-1 4 2 3 8z" fill="#fff" stroke="#222" strokeWidth=".8" /><circle cx="18" cy="17" r="6" fill="#8c8c8c" /><path d="M16.500 14v6M19.500 14v6" stroke="#fff" strokeWidth="1.600" /></svg>
      <svg viewBox="0 0 20 20" className="ml-[26px] h-[19px] w-[19px]"><g fill="none" stroke="#ddd" strokeWidth="1.500"><path d="M1 19Q1 1 19 1" stroke="#888" /><path d="M6 19Q6 6 19 6M11 19q0-8 8-8" /></g><circle cx="17.500" cy="17.500" r="1.500" fill="#fff" /></svg>
      <svg viewBox="0 0 25 20" className="ml-[25px] h-[20px] w-[25px]"><path d="M1 3h20v11H1z" fill="none" stroke="#fff" strokeWidth="1.500" /><path d="M3 5h6v7H3z" fill="#fff" /><circle cx="17.500" cy="13" r="6.500" fill="#0d8a1c" /><path d="M17.500 9q3 3 0 6.500-3-3.500 0-6.500v8" fill="none" stroke="#fff" strokeWidth="1.200" /></svg>
      <svg viewBox="0 0 24 20" className="ml-[23px] h-[18px] w-[23px]"><g fill="none" stroke="#fff" strokeWidth="1.400"><path d="M1 7h4l5-5v16l-5-5H1z" /><path d="M13 7q2 3 0 6M16 5q4 5 0 10" /><path d="M19.500 3q5 7 0 14" stroke="#888" /></g></svg>
      <svg viewBox="0 0 22 22" className="ml-[32px] h-[22px] w-[21px]"><g fill="none" stroke="#fff" strokeWidth="1.500"><path d="M6 15L16 2l3 2L9 17zM9 10q-9 2-8 7 2 5 8 0M15 12q5-3 6 0-1 3-6 0" /></g></svg>
      <Fit w={32} className="ml-[30px] text-[16.5px]">ENG</Fit>
      <div className="ml-[18px] flex w-[96px] shrink-0 flex-col items-center justify-between pt-px text-[16px] leading-[28px]">
        <Fit w={43}>23:48</Fit>
        <Fit w={93}>10/11/2018</Fit>
      </div>
      <svg viewBox="0 0 38 38" className="ml-[24px] h-[38px] w-[38px] shrink-0">
        <path d="M2 3h24v19H16l-4 5-1-5H2z" fill="#fff" />
        <path d="M6 8h15M6 12h15M6 16h9" stroke="#111" strokeWidth="1.400" />
        <circle cx="26" cy="27" r="11" fill="#3b3b3b" stroke="#8a8a8a" strokeWidth="1.200" />
        <text x="26" y="33" textAnchor="middle" fontSize="16" fontWeight="700" fill="#fff">8</text>
      </svg>
      <span className="ml-auto mr-[6px] h-full w-px bg-[#5c5a58]" />
    </div>
  );
}

export default function App() {
  return (
    <div className="h-[1296px] w-[2304px] overflow-hidden bg-white font-['Open_Sans','Noto_Sans',sans-serif]">
      <div className="flex h-[1080px] w-[1920px] flex-col">
        <TitleBar />
        <MenuBar />
        <Toolbar />
        <main className="flex h-[899px] shrink-0 gap-[4px] bg-[#a8cdd9] pl-[1px] pr-[2px] pt-[2px]">
          <div className="flex w-[460px] shrink-0 flex-col gap-[3px]">
            <ProjectExplorer />
            <Outline />
          </div>
          <div className="flex min-w-0 flex-1 flex-col gap-[3px]">
            <Editor />
            <Properties />
          </div>
        </main>
        <StatusBar />
        <Taskbar />
      </div>
    </div>
  );
}
